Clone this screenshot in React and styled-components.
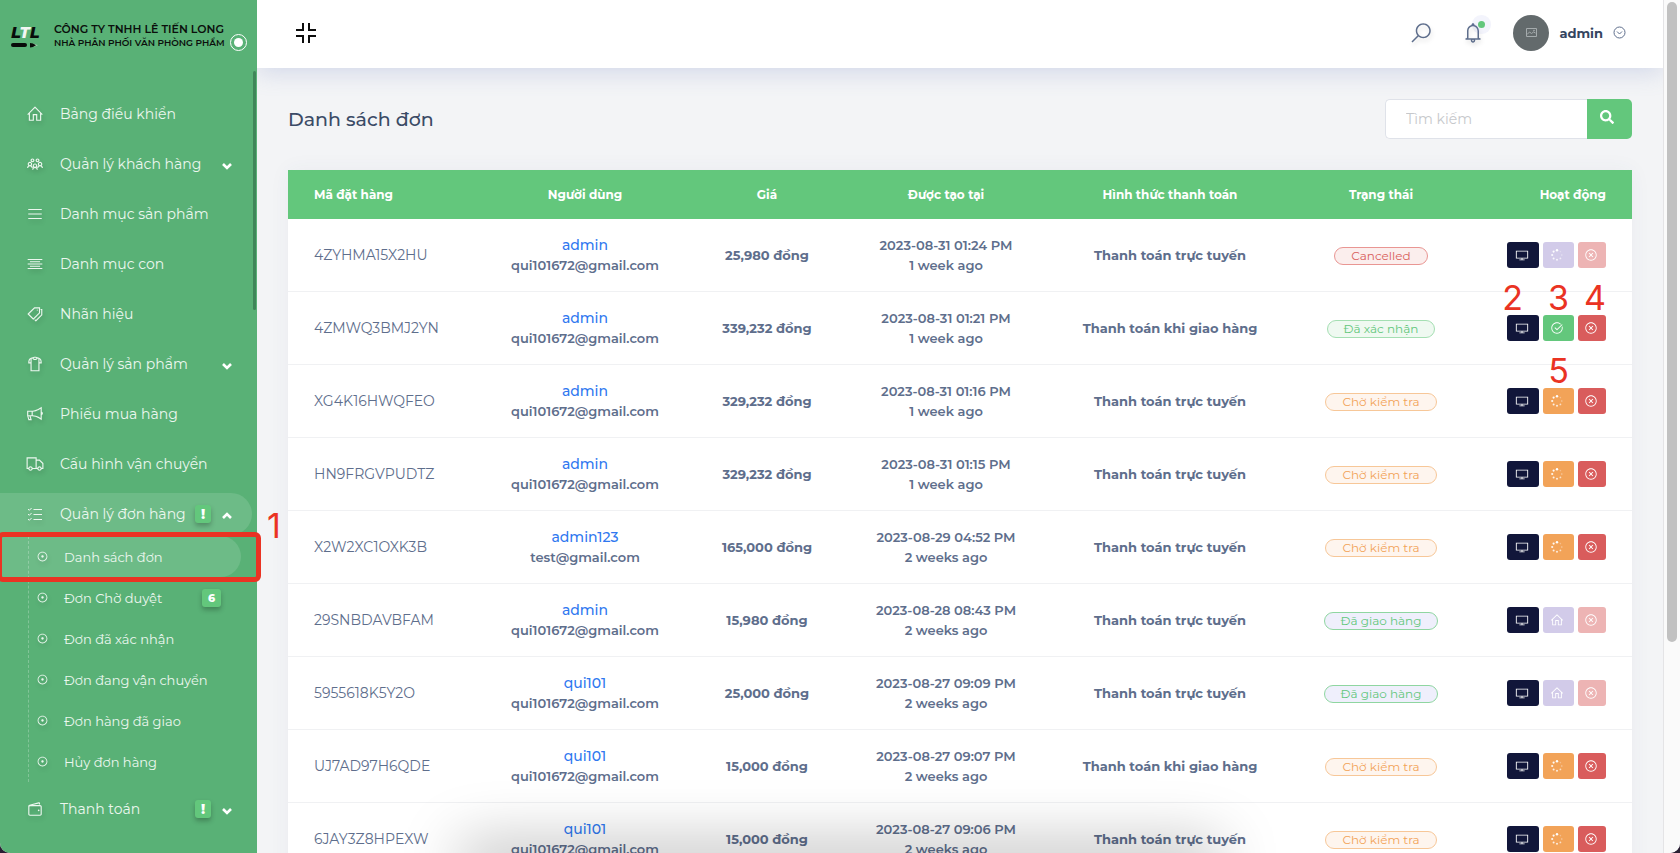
import React from "react";
import styled, { createGlobalStyle, css } from "styled-components";
import {
  LiaHomeSolid, LiaUsersSolid, LiaBarsSolid, LiaAlignCenterSolid, LiaTagsSolid, LiaTshirtSolid,
  LiaBullhornSolid, LiaTruckSolid, LiaWalletSolid, LiaDesktopSolid,
  LiaCheckCircle, LiaTimesCircle, LiaDotCircle, LiaSearchSolid, LiaBellSolid,
} from "react-icons/lia";
import { FaSearch } from "react-icons/fa";

const GlobalStyle = createGlobalStyle`
  * { box-sizing: border-box; }
  html { background: #2a1f33; }
  body { margin: 0; font-family: "Montserrat", Inter, "Noto Sans", sans-serif; color: #5e6e8c; }
  button, input { font-family: inherit; }
  a { text-decoration: none; }
`;

const Shell = styled.div`
  position: relative;
  display: grid;
  grid-template-columns: 257px minmax(0, 1fr) 17px;
  height: 100vh;
  overflow: hidden;
  border-radius: 0 0 10px 10px;
  background: #f3f4f6;
  &::after {
    content: "";
    position: absolute;
    z-index: 3;
    left: 28%;
    right: 28%;
    bottom: -20px;
    height: 20px;
    box-shadow: 0 0 60px 10px rgba(0, 0, 0, 0.28);
    pointer-events: none;
  }
`;

const Sidebar = styled.aside`
  position: relative;
  z-index: 2;
  display: flex;
  flex-direction: column;
  background: #59b176;
  min-height: 0;
`;

const Brand = styled.a`
  display: flex;
  align-items: center;
  height: 72px;
  padding: 0 11px;
  gap: 16px;
  flex: none;
  color: #0b0f0c;
`;

const LogoMark = styled.span`
  display: flex;
  flex-direction: column;
  gap: 2px;
  width: 27px;
  color: #080b09;
  font-size: 16px;
  font-style: italic;
  font-weight: 800;
  line-height: 16px;
`;

const LogoLight = styled.span`
  color: #f2f6f3;
`;

const BrandText = styled.span`
  display: flex;
  flex-direction: column;
  font-weight: 600;
  font-size: 11px;
  line-height: 14px;
  white-space: nowrap;
`;

const BrandSub = styled.span`
  font-size: 9px;
`;

const PinToggle = styled.button`
  position: absolute;
  top: 34px;
  right: 10px;
  display: grid;
  place-items: center;
  width: 17px;
  height: 17px;
  padding: 0;
  border: 1px solid #fff;
  border-radius: 50%;
  background: none;
  &::before {
    content: "";
    width: 9px;
    height: 9px;
    border-radius: 50%;
    background: #fff;
  }
`;

const NavThumb = styled.span`
  position: absolute;
  top: 71px;
  right: 1px;
  width: 3px;
  height: 239px;
  border-radius: 2px;
  background: #3f8659;
`;

const Nav = styled.ul`
  list-style: none;
  margin: 0;
  padding: 21px 0 0;
  display: flex;
  flex-direction: column;
  gap: 8px;
`;

const NavLink = styled.a`
  display: flex;
  align-items: center;
  height: 42px;
  margin-right: 5px;
  padding: 0 20px 0 26px;
  border-radius: 0 21px 21px 0;
  color: #ecf7ef;
  font-size: 14px;
  background: ${(p) => (p.$active ? "#6dbb87" : "transparent")};
`;

const NavIcon = styled.span`
  display: flex;
  width: 34px;
  font-size: 18px;
  filter: drop-shadow(1px 3px 2px rgba(0, 0, 0, 0.15));
`;

const NavLabel = styled.span`
  flex: 1;
  white-space: nowrap;
`;

const Badge = styled.span`
  display: grid;
  place-items: center;
  width: ${(p) => (p.$wide ? 19 : 16)}px;
  height: 18px;
  margin-right: ${(p) => (p.$wide ? 20 : 11)}px;
  border-radius: 3px;
  background: #63c77c;
  color: #fff;
  font-size: ${(p) => (p.$wide ? 11 : 14)}px;
  font-weight: 800;
  box-shadow: 0 3px 5px rgba(0, 0, 0, 0.25);
`;

const SubNav = styled.ul`
  position: relative;
  list-style: none;
  margin: 1px 0 -2px;
  padding: 0;
  &::before {
    content: "";
    position: absolute;
    z-index: 1;
    left: 28px;
    top: 0;
    bottom: 0;
    border-left: 1px dashed rgba(255, 255, 255, 0.25);
  }
`;

const SubItem = styled.li`
  position: relative;
`;

const SubLink = styled.a`
  display: flex;
  align-items: center;
  height: 41px;
  margin-right: 16px;
  padding-left: 36px;
  border-radius: 0 21px 21px 0;
  color: #ecf7ef;
  font-size: 13px;
  background: ${(p) => (p.$active ? "#6dbb87" : "transparent")};
`;

const SubIcon = styled(NavIcon)`
  width: 28px;
  font-size: 13px;
`;

const Highlight = styled.span`
  position: absolute;
  z-index: 3;
  inset: -4px -4px -5px -3px;
  border: 5px solid #ea3323;
  border-radius: 6px;
  pointer-events: none;
`;

const Mark = styled.span`
  position: absolute;
  z-index: 3;
  color: #ea3323;
  font-family: Inter, sans-serif;
  font-size: 34px;
  line-height: 34px;
  pointer-events: none;
`;

const SideMark = styled(Mark)`
  left: 100%;
  bottom: 34px;
  padding-left: 10px;
`;

const markSide = {
  start: "right: 50%;",
  center: "left: 50%; transform: translateX(-50%);",
  end: "right: 0;",
};

const ButtonMark = styled(Mark)`
  bottom: 100%;
  ${(p) => markSide[p.$side]}
`;

const Main = styled.main`
  display: flex;
  flex-direction: column;
  min-width: 0;
  min-height: 0;
  overflow: hidden;
`;

const Header = styled.header`
  position: relative;
  z-index: 1;
  display: flex;
  align-items: center;
  height: 68px;
  flex: none;
  padding: 0 37px 3px 39px;
  background: #fff;
  box-shadow: 0 4px 24px rgba(100, 120, 190, 0.24);
`;

const IconButton = styled.button`
  position: relative;
  display: flex;
  padding: 0;
  border: 0;
  background: none;
  color: #5e6e8c;
  font-size: 24px;
  margin-right: ${(p) => p.$after || 0}px;
`;

const HeaderTool = styled(IconButton)`
  svg {
    stroke: currentColor;
    filter: drop-shadow(1px 3px 2px rgba(0, 0, 0, 0.12));
  }
`;

const BellDot = styled.span`
  position: absolute;
  top: 0;
  right: 0;
  width: 7px;
  height: 7px;
  border-radius: 50%;
  background: #63c77c;
  box-shadow: 0 0 0 6px rgba(99, 110, 220, 0.08);
`;

const Spacer = styled.span`
  flex: 1;
`;

const UserButton = styled.button`
  display: flex;
  align-items: center;
  margin-right: 10px;
  padding: 0;
  border: 0;
  background: none;
  color: #34455f;
  font-size: 13px;
  font-weight: 700;
`;

const Avatar = styled.span`
  display: grid;
  place-items: center;
  width: 36px;
  height: 36px;
  margin-right: 10px;
  border-radius: 50%;
  background: #636a6c;
`;

const Content = styled.section`
  padding: 31px 31px 0;
  flex: 1;
  min-height: 0;
`;

const TitleRow = styled.div`
  display: flex;
  align-items: center;
  justify-content: space-between;
  margin-bottom: 31px;
`;

const Title = styled.h1`
  margin: 0;
  color: #3b4b66;
  font-size: 19px;
  font-weight: 500;
`;

const SearchForm = styled.form`
  display: flex;
  width: 247px;
  height: 40px;
`;

const SearchInput = styled.input`
  flex: 1;
  min-width: 0;
  padding: 0 20px;
  border: 1px solid #dfe2e9;
  border-right: 0;
  border-radius: 5px 0 0 5px;
  background: #fff;
  font-size: 14px;
  outline: 0;
  &::placeholder { color: #c6c8cb; }
`;

const SearchButton = styled.button`
  width: 45px;
  padding: 0 5px 0 0;
  border: 0;
  border-radius: 0 5px 5px 0;
  background: #63c77c;
  color: #fff;
  font-size: 14px;
`;

const Table = styled.table`
  width: 100%;
  table-layout: fixed;
  border-collapse: separate;
  border-spacing: 0;
  background: #fff;
  box-shadow: 0 0 20px rgba(60, 70, 120, 0.05);
`;

const Col = styled.col`
  width: ${(p) => p.$w}px;
`;

const align = css`
  text-align: ${(p) => p.$align || "center"};
`;

const Th = styled.th`
  ${align}
  height: 49px;
  padding: 0 26px;
  background: #63c77c;
  color: #fff;
  font-size: 12px;
  font-weight: 700;
  white-space: nowrap;
`;

const Td = styled.td`
  ${align}
  height: 73px;
  padding: 0 ${(p) => (p.$align ? 26 : 0)}px;
  border-bottom: 1px solid #f0f1f3;
  font-size: ${(p) => p.$size || 13}px;
  font-weight: ${(p) => p.$weight || 500};
  line-height: 20px;
  white-space: nowrap;
`;

const UserLink = styled.a`
  display: block;
  color: #2f78f0;
  font-size: 14px;
  font-weight: 500;
`;

const palette = {
  cancelled: ["#d9605c", "#e99693", "#fbeeed"],
  confirmed: ["#63c77c", "#a4dfb2", "#eff9f1"],
  pending: ["#f2a358", "#f7c798", "#fef5ee"],
  delivered: ["#63c77c", "#8fd6a1", "#efeffc"],
};

const Pill = styled.span`
  display: inline-block;
  padding: 0 16px;
  border: 1px solid ${(p) => palette[p.$tone][1]};
  border-radius: 9px;
  background: ${(p) => palette[p.$tone][2]};
  color: ${(p) => palette[p.$tone][0]};
  font-size: 12px;
  font-weight: 400;
  line-height: 16px;
`;

const Actions = styled.div`
  display: flex;
  justify-content: flex-end;
  gap: 4px;
`;

const Action = styled.button`
  position: relative;
  display: grid;
  place-items: center;
  width: ${(p) => p.$w}px;
  height: 26px;
  padding: 0 3px 0 0;
  border: 0;
  border-radius: 3px;
  background: ${(p) => p.$bg};
  color: #fff;
  font-size: 14px;
`;

const ScrollTrack = styled.div`
  padding: 2px 3px 0;
  border-left: 1px solid #e4e4e6;
  background: #fafafa;
`;

const ScrollThumb = styled.div`
  height: 75vh;
  border-radius: 5px;
  background: #c1c1c1;
`;

const Arrow = styled.svg`
  margin-top: 3px;
`;

const Chevron = ({ up }) => (
  <Arrow width="10" height="8" viewBox="0 0 10 8" fill="none" stroke="#fff" strokeWidth="2.6">
    <path d={up ? "M1 6l4-4 4 4" : "M1 2l4 4 4-4"} />
  </Arrow>
);

const Logo = () => (
  <LogoMark>
    <span>L<LogoLight>T</LogoLight>L</span>
    <svg width="27" height="5" viewBox="0 0 27 5">
      <rect width="16" height="4" rx="2" fill="#080b09" />
      <path d="M19 0l3 .5v3.5l-3 .5z" fill="#080b09" />
      <path d="M22 .5l5 1.8-5 1.8z" fill="#a9cdb5" />
      <path d="M22 .5l3 1.8-3 1.8z" fill="#080b09" />
    </svg>
  </LogoMark>
);

const CompressIcon = () => (
  <svg width="20" height="20" viewBox="0 0 20 20" fill="none" stroke="#0d0d0d" strokeWidth="2">
    <path d="M7 0v7H0M13 0v7h7M7 20v-7H0M13 20v-7h7" />
  </svg>
);

const PictureIcon = () => (
  <svg width="11" height="9" viewBox="0 0 11 9" fill="none" stroke="#a5abad">
    <path d="M.5.5h10v8H.5zM1 6.5L3.5 4l2 1.5L7.5 4l2 1" />
    <circle cx="8" cy="2.5" r=".5" />
  </svg>
);

const CircleDownIcon = () => (
  <svg width="13" height="13" viewBox="0 0 13 13" fill="none" stroke="#5e6e8c">
    <circle cx="6.5" cy="6.5" r="5.5" />
    <path d="M4 5.5L6.5 8 9 5.5" />
  </svg>
);

const TasksIcon = () => (
  <svg width="18" height="18" viewBox="0 0 18 18" fill="none" stroke="currentColor">
    <path d="M7.5 4.500H16M7.500 9.500H16M7.500 14.500H16" strokeWidth="1.2" />
    <path d="M2 4l1.300 1.300L5.600 3M2 9l1.300 1.300L5.600 8M2 14l1.300 1.300L5.600 13" />
  </svg>
);

const spinnerDots = [
  [7, 2.2, 1.2, 1], [3.6, 3.6, 1.1, 0.95], [2.2, 7, 1.1, 0.9], [3.6, 10.4, 1, 0.85],
  [7, 11.8, 1, 0.8], [10.4, 10.4, 0.9, 0.65], [11.8, 7, 0.8, 0.45], [10.4, 3.6, 0.8, 0.3],
];

const SpinnerIcon = () => (
  <svg width="14" height="14" viewBox="0 0 14 14" fill="currentColor">
    {spinnerDots.map(([cx, cy, r, opacity]) => (
      <circle key={`${cx}-${cy}`} cx={cx} cy={cy} r={r} opacity={opacity} />
    ))}
  </svg>
);

const nav = [
  [LiaHomeSolid, "Bảng điều khiển"],
  [LiaUsersSolid, "Quản lý khách hàng", "down"],
  [LiaBarsSolid, "Danh mục sản phẩm"],
  [LiaAlignCenterSolid, "Danh mục con"],
  [LiaTagsSolid, "Nhãn hiệu"],
  [LiaTshirtSolid, "Quản lý sản phẩm", "down"],
  [LiaBullhornSolid, "Phiếu mua hàng"],
  [LiaTruckSolid, "Cấu hình vận chuyển"],
  [TasksIcon, "Quản lý đơn hàng", "up", true],
  [LiaWalletSolid, "Thanh toán", "down", true],
];

const subNav = ["Danh sách đơn", "Đơn Chờ duyệt", "Đơn đã xác nhận", "Đơn đang vận chuyển", "Đơn hàng đã giao", "Hủy đơn hàng"];

const ONLINE = "Thanh toán trực tuyến";
const COD = "Thanh toán khi giao hàng";
const MAIL = "qui101672@gmail.com";

const orders = [
  ["4ZYHMA15X2HU", "admin", MAIL, "25,980", "2023-08-31 01:24 PM", "1 week ago", ONLINE, "cancelled"],
  ["4ZMWQ3BMJ2YN", "admin", MAIL, "339,232", "2023-08-31 01:21 PM", "1 week ago", COD, "confirmed", ["2", "3", "4"]],
  ["XG4K16HWQFEO", "admin", MAIL, "329,232", "2023-08-31 01:16 PM", "1 week ago", ONLINE, "pending", ["", "5", ""]],
  ["HN9FRGVPUDTZ", "admin", MAIL, "329,232", "2023-08-31 01:15 PM", "1 week ago", ONLINE, "pending"],
  ["X2W2XC1OXK3B", "admin123", "test@gmail.com", "165,000", "2023-08-29 04:52 PM", "2 weeks ago", ONLINE, "pending"],
  ["29SNBDAVBFAM", "admin", MAIL, "15,980", "2023-08-28 08:43 PM", "2 weeks ago", ONLINE, "delivered"],
  ["5955618K5Y2O", "qui101", MAIL, "25,000", "2023-08-27 09:09 PM", "2 weeks ago", ONLINE, "delivered"],
  ["UJ7AD97H6QDE", "qui101", MAIL, "15,000", "2023-08-27 09:07 PM", "2 weeks ago", COD, "pending"],
  ["6JAY3Z8HPEXW", "qui101", MAIL, "15,000", "2023-08-27 09:06 PM", "2 weeks ago", ONLINE, "pending"],
];

const statuses = {
  cancelled: { label: "Cancelled", icon: SpinnerIcon, bg: "#d2cbe9", closed: true },
  confirmed: { label: "Đã xác nhận", icon: LiaCheckCircle, bg: "#63c77c" },
  pending: { label: "Chờ kiểm tra", icon: SpinnerIcon, bg: "#f2a358" },
  delivered: { label: "Đã giao hàng", icon: LiaHomeSolid, bg: "#d2cbe9", closed: true },
};

function OrderRow({ order }) {
  const [code, user, mail, price, date, ago, payment, status, marks = []] = order;
  const { label, icon: StatusIcon, bg, closed } = statuses[status];
  return (
    <tr>
      <Td $align="left" $weight={400} $size={14}>{code}</Td>
      <Td $weight={600}><UserLink href="#user">{user}</UserLink>{mail}</Td>
      <Td $weight={700}>{price} đồng</Td>
      <Td $weight={600}>{date}<br />{ago}</Td>
      <Td $weight={700}>{payment}</Td>
      <Td><Pill $tone={status}>{label}</Pill></Td>
      <Td $align="right">
        <Actions>
          <Action $w={32} $bg="#11163a" aria-label="Xem">
            <LiaDesktopSolid />{marks[0] && <ButtonMark $side="start">{marks[0]}</ButtonMark>}
          </Action>
          <Action $w={31} $bg={bg} aria-label={label}>
            <StatusIcon />{marks[1] && <ButtonMark $side="center">{marks[1]}</ButtonMark>}
          </Action>
          <Action $w={28} $bg={closed ? "#edb4b4" : "#d95c5c"} aria-label="Hủy">
            <LiaTimesCircle />{marks[2] && <ButtonMark $side="end">{marks[2]}</ButtonMark>}
          </Action>
        </Actions>
      </Td>
    </tr>
  );
}

export default function App() {
  return (
    <>
      <GlobalStyle />
      <Shell>
        <Sidebar>
          <Brand href="#home">
            <Logo />
            <BrandText>CÔNG TY TNHH LÊ TIẾN LONG<BrandSub>NHÀ PHÂN PHỐI VĂN PHÒNG PHẨM</BrandSub></BrandText>
          </Brand>
          <PinToggle aria-label="Thu gọn" />
          <NavThumb />
          <Nav>
            {nav.map(([Icon, label, arrow, alert]) => (
              <li key={label}>
                <NavLink href="#nav" $active={arrow === "up"}>
                  <NavIcon><Icon /></NavIcon>
                  <NavLabel>{label}</NavLabel>
                  {alert && <Badge>!</Badge>}
                  {arrow && <Chevron up={arrow === "up"} />}
                </NavLink>
                {arrow === "up" && (
                  <SubNav>
                    {subNav.map((text, i) => (
                      <SubItem key={text}>
                        <SubLink href="#orders" $active={i === 0}>
                          <SubIcon><LiaDotCircle /></SubIcon>
                          <NavLabel>{text}</NavLabel>
                          {i === 1 && <Badge $wide>6</Badge>}
                        </SubLink>
                        {i === 0 && <><Highlight /><SideMark>1</SideMark></>}
                      </SubItem>
                    ))}
                  </SubNav>
                )}
              </li>
            ))}
          </Nav>
        </Sidebar>
        <Main>
          <Header>
            <IconButton aria-label="Thu nhỏ"><CompressIcon /></IconButton>
            <Spacer />
            <HeaderTool $after={28} aria-label="Tìm"><LiaSearchSolid /></HeaderTool>
            <HeaderTool $after={28} aria-label="Thông báo"><LiaBellSolid /><BellDot /></HeaderTool>
            <UserButton><Avatar><PictureIcon /></Avatar>admin</UserButton>
            <IconButton aria-label="Tài khoản"><CircleDownIcon /></IconButton>
          </Header>
          <Content>
            <TitleRow>
              <Title>Danh sách đơn</Title>
              <SearchForm>
                <SearchInput placeholder="Tìm kiếm" aria-label="Tìm kiếm" />
                <SearchButton type="button" aria-label="Tìm kiếm"><FaSearch /></SearchButton>
              </SearchForm>
            </TitleRow>
            <Table>
              <colgroup>
                {[202, 190, 174, 184, 264, 158, 172].map((w, i) => <Col key={i} $w={w} />)}
              </colgroup>
              <thead>
                <tr>
                  <Th $align="left">Mã đặt hàng</Th>
                  <Th>Người dùng</Th>
                  <Th>Giá</Th>
                  <Th>Được tạo tại</Th>
                  <Th>Hình thức thanh toán</Th>
                  <Th>Trạng thái</Th>
                  <Th $align="right">Hoạt động</Th>
                </tr>
              </thead>
              <tbody>
                {orders.map((order) => <OrderRow key={order[0]} order={order} />)}
              </tbody>
            </Table>
          </Content>
        </Main>
        <ScrollTrack><ScrollThumb /></ScrollTrack>
      </Shell>
    </>
  );
}
